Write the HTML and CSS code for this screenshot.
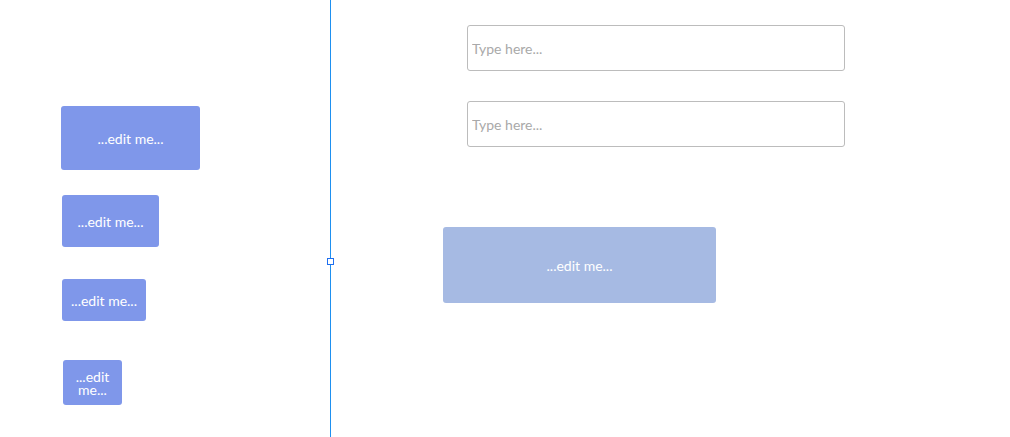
FILE: index.html
```html
<!DOCTYPE html>
<html lang="en">
<head>
    <meta charset="UTF-8">
    <meta name="viewport" content="width=device-width, initial-scale=1.0">
    <title>Editor</title>
    <link rel="stylesheet" href="styles.css">
</head>
<body>

    <div class="left-pane">
        <button class="edit-btn btn-one">...edit me...</button>
        <button class="edit-btn btn-two">...edit me...</button>
        <button class="edit-btn btn-three">...edit me...</button>
        <button class="edit-btn btn-four">...edit me...</button>
    </div>

    <div class="divider">
        <span class="handle"></span>
    </div>

    <div class="right-pane">
        <input class="text-field field-one" type="text" placeholder="Type here...">
        <input class="text-field field-two" type="text" placeholder="Type here...">
        <button class="wide-btn">...edit me...</button>
    </div>

</body>
</html>
```

FILE: styles.css
```css
body {
    font-family: Lato, 'Open Sans', sans-serif;
    margin: 0;
    background: #ffffff;
    display: flex;
    height: 437px;
    overflow: hidden;
}
.left-pane {
    width: 330px;
    display: flex;
    flex-direction: column;
    align-items: flex-start;
}
.edit-btn {
    font-family: inherit;
    font-size: 14px;
    line-height: 13px;
    color: #ffffff;
    background-color: #7f97ea;
    border: none;
    border-radius: 3px;
    display: flex;
    align-items: center;
    justify-content: center;
    text-align: center;
    padding: 0 8px;
    box-sizing: border-box;
}
.btn-one {
    width: 139px;
    height: 64px;
    margin: 106px 0 0 61px;
}
.btn-two {
    width: 97px;
    height: 52px;
    margin: 25px 0 0 62px;
}
.btn-three {
    width: 84px;
    height: 42px;
    margin: 32px 0 0 62px;
}
.btn-four {
    width: 59px;
    height: 45px;
    margin: 39px 0 0 63px;
}
.divider {
    width: 1px;
    background-color: #1e90f0;
    position: relative;
}
.handle {
    position: absolute;
    left: -3px;
    top: 258px;
    width: 5px;
    height: 5px;
    background: #ffffff;
    border: 1px solid #1e6ff0;
}
.right-pane {
    flex: 1;
    display: flex;
    flex-direction: column;
    align-items: flex-start;
}
.text-field {
    width: 378px;
    height: 46px;
    box-sizing: border-box;
    margin-left: 136px;
    border: 1px solid #bcbcbc;
    border-radius: 3px;
    padding: 0 4px;
    font-family: inherit;
    font-size: 14px;
    color: #333;
    outline: none;
}
.text-field::placeholder {
    color: #a9a9a9;
}
.field-one {
    margin-top: 25px;
}
.field-two {
    margin-top: 30px;
}
.wide-btn {
    width: 273px;
    height: 76px;
    margin: 80px 0 0 112px;
    font-family: inherit;
    font-size: 14px;
    color: #ffffff;
    background-color: #a6bae3;
    border: none;
    border-radius: 3px;
}
```
